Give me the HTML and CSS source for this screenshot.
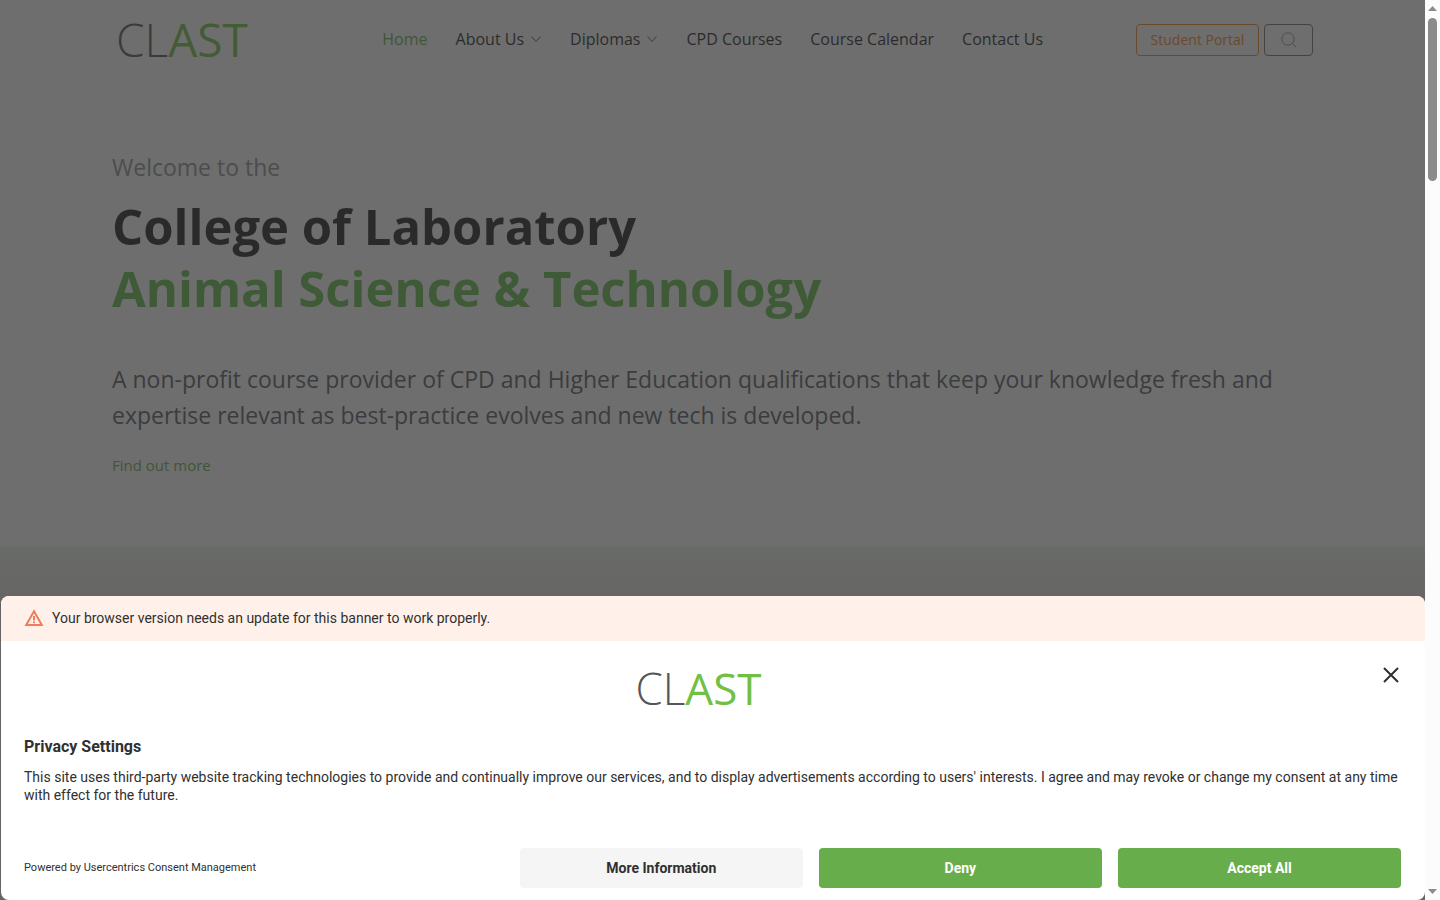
FILE: index.html
```html
<!DOCTYPE html>
<html lang="en">
<head>
  <meta charset="UTF-8">
  <meta name="viewport" content="width=device-width, initial-scale=1.0">
  <title>CLAST - College of Laboratory Animal Science &amp; Technology</title>
  <link rel="stylesheet" href="styles.css">
</head>
<body>
<div class="window">
  <div class="page">
    <header class="site-header">
      <a class="logo" href="#">CL<span class="logo-accent">AST</span></a>
      <nav class="main-nav">
        <a class="active" href="#">Home</a>
        <a href="#">About Us
          <svg class="chevron" viewBox="0 0 12 12"><path d="M1.5 3.5 6 8.5 10.5 3.5"/></svg>
        </a>
        <a href="#">Diplomas
          <svg class="chevron" viewBox="0 0 12 12"><path d="M1.5 3.5 6 8.5 10.5 3.5"/></svg>
        </a>
        <a href="#">CPD Courses</a>
        <a href="#">Course Calendar</a>
        <a href="#">Contact Us</a>
      </nav>
      <div class="header-actions">
        <a class="portal-button" href="#">Student Portal</a>
        <button class="search-button" aria-label="Search">
          <svg viewBox="0 0 16 16"><circle cx="7" cy="7" r="6.2"/><path d="M11.4 11.4 15.3 15.3"/></svg>
        </button>
      </div>
    </header>

    <main class="hero">
      <p class="welcome">Welcome to the</p>
      <h1>College of Laboratory<br><span>Animal Science &amp; Technology</span></h1>
      <p class="lead">A non-profit course provider of CPD and Higher Education qualifications that keep your knowledge fresh and expertise relevant as best-practice evolves and new tech is developed.</p>
      <a class="more-link" href="#">Find out more</a>
    </main>
    <section class="courses"></section>

    <div class="overlay"></div>

    <div class="consent" role="dialog" aria-labelledby="consent-title">
      <div class="consent-warning">
        <svg viewBox="0 0 20 20"><path d="M10 3.2 17.8 17H2.2Z"/><path d="M10 8v4.6M10 13.6v1.6"/></svg>
        <span>Your browser version needs an update for this banner to work properly.</span>
      </div>
      <div class="consent-body">
        <div class="consent-top">
          <div class="logo consent-logo">CL<span class="logo-accent">AST</span></div>
          <button class="close-button" aria-label="Close">
            <svg viewBox="0 0 16 16"><path d="M1 1 15 15M15 1 1 15"/></svg>
          </button>
        </div>
        <h2 id="consent-title">Privacy Settings</h2>
        <p class="consent-text">This site uses third-party website tracking technologies to provide and continually improve our services, and to display advertisements according to users' interests. I agree and may revoke or change my consent at any time with effect for the future.</p>
        <div class="consent-footer">
          <div class="powered">Powered by <a href="#">Usercentrics Consent Management</a></div>
          <div class="consent-buttons">
            <button class="secondary">More Information</button>
            <button>Deny</button>
            <button>Accept All</button>
          </div>
        </div>
      </div>
    </div>
  </div>

  <div class="scrollbar">
    <svg viewBox="0 0 9 5"><path d="M0 5 4.5 0 9 5Z"/></svg>
    <div class="thumb"></div>
    <svg viewBox="0 0 9 5"><path d="M0 0 4.5 5 9 0Z"/></svg>
  </div>
</div>
</body>
</html>
```
FILE: styles.css
```css
* { box-sizing: border-box; }
body {
  margin: 0;
  font-family: "Open Sans", sans-serif;
  color: #1c1c1c;
}
a {
  color: inherit;
  text-decoration: none;
}
button {
  font-family: inherit;
  cursor: pointer;
}
.window {
  display: flex;
  height: 100vh;
}
.page {
  flex: 1;
  position: relative;
  display: flex;
  flex-direction: column;
  overflow: hidden;
  background-color: #ffffff;
}

/* header */
.site-header {
  display: flex;
  align-items: center;
  height: 78px;
  padding: 0 112px 0 116px;
}
.logo {
  font-family: "Open Sans", sans-serif;
  font-size: 46px;
  font-weight: 300;
  line-height: 48px;
  color: #55565a;
}
.logo-accent {
  font-weight: 400;
  color: #72bf44;
}
.main-nav {
  display: flex;
  gap: 28px;
  margin: 0 93px 0 auto;
  font-size: 16px;
}
.main-nav a {
  display: flex;
  align-items: center;
  gap: 6px;
}
.main-nav .active { color: #67ad4b; }
.chevron {
  width: 12px;
  height: 12px;
  fill: none;
  stroke: #55595c;
}
.header-actions {
  display: flex;
  gap: 5px;
  padding-top: 2px;
}
.portal-button,
.search-button {
  display: flex;
  align-items: center;
  justify-content: center;
  height: 32px;
  border: 1px solid #6c757d;
  border-radius: 4px;
  background-color: transparent;
}
.portal-button {
  width: 123px;
  padding-bottom: 2px;
  border-color: #f58220;
  font-size: 14px;
  color: #f58220;
}
.search-button { width: 49px; }
.search-button svg {
  width: 16px;
  height: 16px;
  fill: none;
  stroke: #8a8f94;
}

/* hero */
.hero {
  height: 469px;
  padding: 71px 112px 0;
}
.welcome {
  margin: 0 0 10px;
  font-size: 23px;
  line-height: 36px;
  color: #8a8f94;
}
h1 {
  margin: 0 0 42px;
  font-size: 49px;
  font-weight: 700;
  line-height: 62px;
}
h1 span { color: #5fbb46; }
.lead {
  margin: 0 0 20px;
  font-size: 23px;
  line-height: 36px;
  color: #55595c;
}
.more-link {
  font-size: 15px;
  line-height: 24px;
  color: #67ad4b;
}
.courses {
  flex: 1;
  background: linear-gradient(#eef4ea, #e2e2e0 60px);
}
.overlay {
  position: absolute;
  inset: 0;
  background-color: rgba(48, 48, 48, 0.7);
}

/* consent banner */
.consent {
  position: absolute;
  left: 1px;
  right: 0;
  bottom: 0;
  overflow: hidden;
  border-radius: 8px;
  background-color: #ffffff;
  font-family: Roboto, sans-serif;
  font-size: 14px;
  line-height: 18px;
  color: #303030;
}
.consent-warning {
  display: flex;
  align-items: center;
  gap: 8px;
  height: 45px;
  padding: 0 23px 1px;
  background-color: #fff1ea;
}
.consent-warning svg {
  width: 20px;
  height: 20px;
  fill: none;
  stroke: #ed7d5b;
  stroke-width: 2;
}
.consent-body { padding: 24px 24px 12px 23px; }
.consent-top {
  display: flex;
  justify-content: center;
  position: relative;
  height: 72px;
  padding-right: 28px;
}
.consent-logo {
  font-size: 44px;
  line-height: 46px;
}
.close-button {
  position: absolute;
  top: 0;
  right: 0;
  display: flex;
  padding: 2px;
  border: none;
  background: none;
}
.close-button svg {
  width: 16px;
  height: 16px;
  fill: none;
  stroke: #303030;
  stroke-width: 2;
}
h2 {
  margin: 0 0 12px;
  font-size: 16px;
  font-weight: 700;
  line-height: 19px;
}
.consent-text { margin: 0; }
.consent-footer {
  display: flex;
  align-items: center;
  justify-content: space-between;
  margin-top: 44px;
}
.powered { font-size: 11px; }
.consent-buttons {
  display: flex;
  gap: 16px;
  width: 64%;
}
.consent-buttons button {
  flex: 1;
  height: 40px;
  border: none;
  border-radius: 4px;
  background-color: #67ad4b;
  font-size: 14px;
  font-weight: 700;
  color: #ffffff;
}
.consent-buttons .secondary {
  background-color: #f5f5f5;
  color: #303030;
}

/* scrollbar */
.scrollbar {
  display: flex;
  flex-direction: column;
  align-items: center;
  width: 15px;
  padding: 6px 0;
  background-color: #fcfcfc;
}
.scrollbar svg {
  width: 9px;
  height: 5px;
  fill: #8b8b8b;
}
.thumb {
  width: 9px;
  height: 163px;
  margin: 7px 0 auto;
  border-radius: 5px;
  background-color: #8b8b8b;
}
```
